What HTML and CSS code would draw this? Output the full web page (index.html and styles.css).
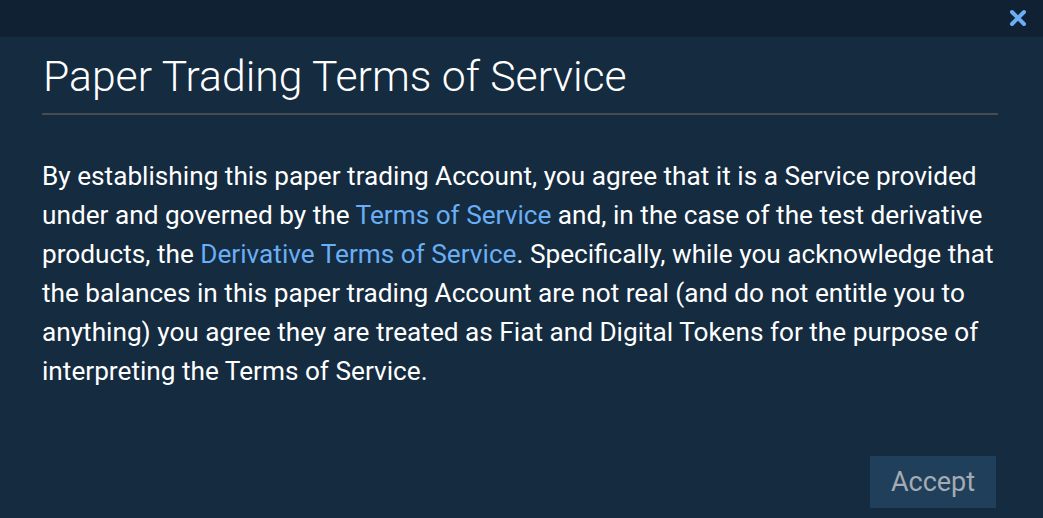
FILE: index.html
```html
<!DOCTYPE html>
<html>
<head>
<meta charset="utf-8">
<title>Paper Trading Terms of Service</title>
<link rel="stylesheet" href="styles.css">
</head>
<body>
<div class="topbar">
    <span class="close">
        <svg width="18" height="18" viewBox="0 0 18 18"><path d="M3 3 L15 15 M15 3 L3 15" stroke="#6aaef5" stroke-width="4" stroke-linecap="round"/></svg>
    </span>
</div>
<div class="dialog">
    <h1>Paper Trading Terms of Service</h1>
    <p>By establishing this paper trading Account, you agree that it is a Service provided under and governed by the <a href="#">Terms of Service</a> and, in the case of the test derivative products, the <a href="#">Derivative Terms of Service</a>. Specifically, while you acknowledge that the balances in this paper trading Account are not real (and do not entitle you to anything) you agree they are treated as Fiat and Digital Tokens for the purpose of interpreting the Terms of Service.</p>
    <div class="actions">
        <button class="accept">Accept</button>
    </div>
</div>
</body>
</html>
```
FILE: styles.css
```css
body{margin:0;background:#142b40;font-family:Roboto,"Liberation Sans",sans-serif;height:518px;overflow:hidden;}
.topbar{height:37px;background:#0f2133;display:flex;justify-content:flex-end;align-items:flex-start;}
.close{padding:9px 16px 0 0;}
.dialog{padding:0 45px 0 42px;}
h1{margin:0;padding:14px 0 12px 1px;font-size:42.7px;font-weight:300;color:#fff;border-bottom:2px solid #464c52;line-height:50px;}
p{margin:0;padding-top:42px;font-size:26.2px;line-height:39px;color:#fff;}
a{color:#6aaef5;text-decoration:none;}
.actions{display:flex;justify-content:flex-end;padding-top:65px;}
.accept{background:#203f5a;color:#a4abb3;border:0;font-family:inherit;font-size:27px;width:126px;height:52px;padding:0;margin-right:2px;}
```
